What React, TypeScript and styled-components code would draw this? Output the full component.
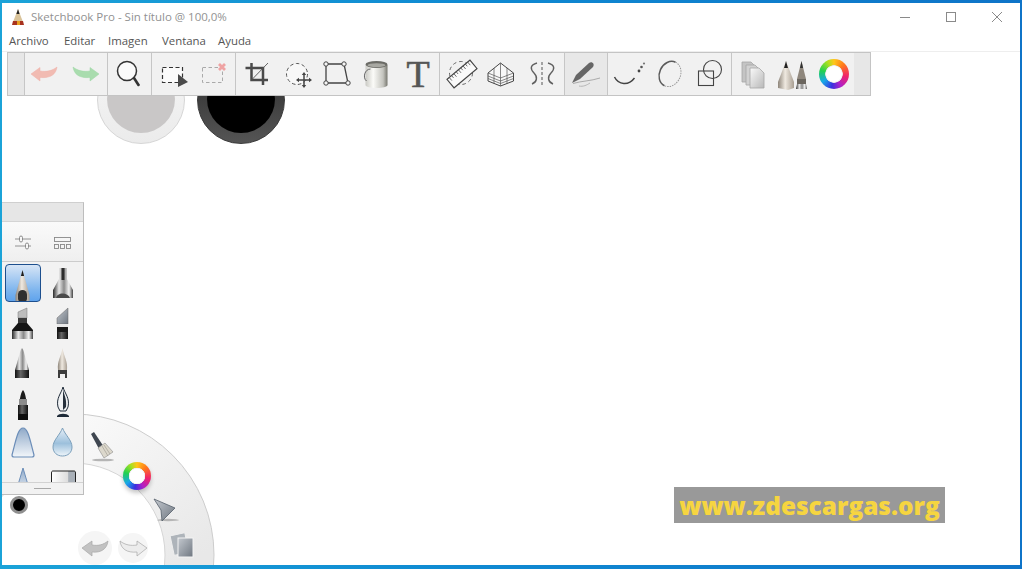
import * as React from "react";
import styled, { createGlobalStyle } from "styled-components";

const GlobalStyle = createGlobalStyle`
  html, body, #root {
    margin: 0;
    width: 100%;
    height: 100%;
    overflow: hidden;
  }
  body {
    font-family: "Open Sans", "Liberation Sans", sans-serif;
  }
`;

const Window = styled.div`
  box-sizing: border-box;
  width: 1022px;
  height: 569px;
  padding: 3px 2px 4px;
  display: flex;
  flex-direction: column;
  background: linear-gradient(90deg, #1ba3d8 0%, #0f8ad2 45%, #0f74c8 100%);
`;

const TitleBar = styled.div`
  height: 27px;
  flex: none;
  display: flex;
  align-items: center;
  background: #fff;
  padding-left: 9px;
`;

const AppTitle = styled.span`
  margin-left: 6px;
  font-size: 11.5px;
  color: #929292;
`;

const WindowButtons = styled.div`
  margin-left: auto;
  display: flex;
  align-items: center;
`;

const WindowButton = styled.div`
  width: 46px;
  height: 27px;
  display: flex;
  align-items: center;
  justify-content: center;
`;

const MenuBar = styled.div`
  box-sizing: border-box;
  height: 22px;
  flex: none;
  display: grid;
  grid-template-columns: 55px 44px 54px 56px 40px;
  align-items: center;
  padding: 0 0 0 7px;
  background: #fff;
  border-bottom: 1px solid #eeeeee;
`;

const MenuItem = styled.span`
  font-size: 11.4px;
  color: #555;
`;

const Canvas = styled.div`
  flex: 1;
  position: relative;
  overflow: hidden;
  background: #fff;
`;

const Toolbar = styled.div`
  box-sizing: border-box;
  position: absolute;
  z-index: 3;
  left: 5px;
  top: 0;
  width: 864px;
  height: 44px;
  display: flex;
  border: 1px solid #c4c4c4;
  background: #e7e7e7;
`;

const ToolEnd = styled.div<{ $w: number }>`
  width: ${(p) => p.$w}px;
  flex: none;
`;

const ToolSection = styled.div<{ $w: number }>`
  box-sizing: border-box;
  width: ${(p) => p.$w}px;
  flex: none;
  display: flex;
  background: #f1f1f1;
  border-left: 1px solid #c6c6c6;
`;

const ToolSlot = styled.div<{ $active?: boolean }>`
  flex: 1;
  display: flex;
  align-items: center;
  justify-content: center;
  background: ${(p) => (p.$active ? "#e8e8e8" : "transparent")};
`;

const Icon = styled.svg`
  width: 40px;
  height: 40px;
  flex: none;
  display: block;
`;

const ColorRing = styled.div<{ $size: number; $hole: number }>`
  width: ${(p) => p.$size}px;
  height: ${(p) => p.$size}px;
  flex: none;
  border-radius: 50%;
  background:
    radial-gradient(circle, #ffffff ${(p) => p.$hole - 1}px, #e8e8e8 ${(p) => p.$hole}px, transparent ${(p) => p.$hole + 0.5}px),
    conic-gradient(#ffc61a, #ff7a1a 45deg, #f0246a 100deg, #b020c8 150deg, #3a30e0 190deg, #18a8e8 235deg, #22d050 285deg, #a8e020 330deg, #ffc61a);
`;

const Puck = styled.div<{ $left: number; $dark?: boolean }>`
  position: absolute;
  left: ${(p) => p.$left}px;
  top: 4px;
  width: 88px;
  height: 88px;
  box-sizing: border-box;
  border-radius: 50%;
  display: flex;
  align-items: center;
  justify-content: center;
  padding-bottom: 2px;
  background: ${(p) =>
    p.$dark
      ? "linear-gradient(#2a2a2a, #555)"
      : "linear-gradient(#f6f6f6, #ebebeb)"};
  border: 1px solid ${(p) => (p.$dark ? "#3a3a3a" : "#d6d6d6")};
`;

const PuckCore = styled.div<{ $dark?: boolean }>`
  width: 68px;
  height: 68px;
  border-radius: 50%;
  background: ${(p) => (p.$dark ? "#000" : "#c9c7c7")};
`;

const BrushPalette = styled.div`
  position: absolute;
  z-index: 2;
  left: 0;
  top: 150px;
  width: 82px;
  height: 293px;
  box-sizing: border-box;
  display: flex;
  flex-direction: column;
  background: #f2f2f2;
  border-right: 1px solid #bdbdbd;
  border-top: 1px solid #cfcfcf;
  border-bottom: 1px solid #bdbdbd;
`;

const PaletteHeader = styled.div`
  height: 18px;
  flex: none;
  background: #e6e6e6;
  border-bottom: 1px solid #d4d4d4;
`;

const PaletteTools = styled.div`
  height: 40px;
  flex: none;
  box-sizing: border-box;
  display: grid;
  grid-template-columns: 40px 40px;
  align-items: center;
  justify-items: center;
  background: linear-gradient(#fafafa, #efefef);
  border-bottom: 1px solid #cccccc;
`;

const BrushGrid = styled.div`
  height: 220px;
  flex: none;
  overflow: hidden;
  display: grid;
  grid-template-columns: 40px 40px;
  grid-auto-rows: 40.5px;
`;

const BrushCell = styled.div<{ $selected?: boolean }>`
  display: flex;
  align-items: center;
  justify-content: center;
  overflow: hidden;
  ${(p) =>
    p.$selected
      ? `
    margin: 2px 1px 1px 3px;
    border: 1px solid #1d4f8e;
    border-radius: 4px;
    background: linear-gradient(#d7e5f6, #7eb5ee 70%, #5fa3ec);
  `
      : ""}
`;

const PaletteFooter = styled.div`
  flex: 1;
  display: flex;
  align-items: center;
  justify-content: center;
  border-top: 1px solid #d2d2d2;
`;

const FooterGrip = styled.div`
  width: 17px;
  height: 1px;
  background: #a8a8a8;
`;

const ColorDot = styled.div`
  position: absolute;
  left: 8px;
  top: 444px;
  width: 18px;
  height: 18px;
  box-sizing: border-box;
  border-radius: 50%;
  background: #000;
  border: 3px solid #8f8f8f;
`;

const Lagoon = styled.div`
  position: absolute;
  z-index: 1;
  left: 0;
  top: 340px;
  width: 230px;
  height: 173px;
`;

const LagoonArt = styled.svg`
  display: block;
  width: 230px;
  height: 173px;
`;

const LagoonRing = styled.div`
  position: absolute;
  left: 121px;
  top: 70px;
  filter: drop-shadow(0 3px 2px rgba(0, 0, 0, 0.22));
`;

const Watermark = styled.div`
  position: absolute;
  z-index: 2;
  left: 672px;
  top: 435px;
  width: 271px;
  height: 36px;
  display: flex;
  align-items: center;
  justify-content: center;
  background: #999999;
  color: #f6d540;
  font-family: "Open Sans", sans-serif;
  font-weight: 800;
  font-size: 24.4px;
  white-space: nowrap;
`;

const GradientDefs = () => (
  <svg width="0" height="0" style={{ display: "block" }}>
    <defs>
      <linearGradient id="metal" x1="0" x2="1" y1="0" y2="0">
        <stop offset="0" stopColor="#2a2a2a" />
        <stop offset="0.3" stopColor="#e8e8e8" />
        <stop offset="0.55" stopColor="#8a8a8a" />
        <stop offset="0.8" stopColor="#f4f4f4" />
        <stop offset="1" stopColor="#444" />
      </linearGradient>
      <linearGradient id="dark" x1="0" x2="1" y1="0" y2="0">
        <stop offset="0" stopColor="#111" />
        <stop offset="0.4" stopColor="#666" />
        <stop offset="1" stopColor="#111" />
      </linearGradient>
      <linearGradient id="beige" x1="0" x2="1" y1="0" y2="0">
        <stop offset="0" stopColor="#8e857a" />
        <stop offset="0.45" stopColor="#efe9e0" />
        <stop offset="1" stopColor="#a89e92" />
      </linearGradient>
      <linearGradient id="paper" x1="0" x2="1" y1="0" y2="1">
        <stop offset="0" stopColor="#fafafa" />
        <stop offset="1" stopColor="#b8b8b8" />
      </linearGradient>
      <linearGradient id="can" x1="0" x2="1" y1="0" y2="0">
        <stop offset="0" stopColor="#c9c9c4" />
        <stop offset="0.35" stopColor="#fbfbf8" />
        <stop offset="0.8" stopColor="#c4c4be" />
        <stop offset="1" stopColor="#77776f" />
      </linearGradient>
      <linearGradient id="bell" x1="0" x2="0" y1="0" y2="1">
        <stop offset="0" stopColor="#8fa9c8" />
        <stop offset="1" stopColor="#f2f6fa" />
      </linearGradient>
      <linearGradient id="drop" x1="0" x2="0" y1="0" y2="1">
        <stop offset="0" stopColor="#e8f0f8" />
        <stop offset="0.55" stopColor="#9cc0dc" />
        <stop offset="1" stopColor="#eef5fa" />
      </linearGradient>
      <linearGradient id="rubber" x1="0" x2="1" y1="0" y2="0">
        <stop offset="0" stopColor="#ffffff" />
        <stop offset="0.7" stopColor="#dcdcdc" />
        <stop offset="0.71" stopColor="#a9b0b8" />
        <stop offset="1" stopColor="#a9b0b8" />
      </linearGradient>
      <linearGradient id="wheelBand" gradientUnits="userSpaceOnUse" x1="60" y1="415" x2="190" y2="565">
        <stop offset="0" stopColor="#fbfbfb" />
        <stop offset="1" stopColor="#e8e8e8" />
      </linearGradient>
      <linearGradient id="slate" x1="0" x2="1" y1="0" y2="1">
        <stop offset="0" stopColor="#c4c9cf" />
        <stop offset="1" stopColor="#6e7680" />
      </linearGradient>
    </defs>
  </svg>
);

const arrowLeft = "M7 20 L16 13.5 L16 17 C22 18 28 17 33 13 C32 20 27 24.5 16 23.5 L16 27 Z";

const UndoIcon = () => (
  <Icon viewBox="0 0 40 40">
    <path d={arrowLeft} transform="translate(-2 0)" fill="#f1bbb2" stroke="#eeb0a8" strokeWidth="0.5" />
  </Icon>
);

const RedoIcon = () => (
  <Icon viewBox="0 0 40 40">
    <path d={arrowLeft} transform="matrix(-1 0 0 1 39 0)" fill="#a9dcae" stroke="#9dd6a4" strokeWidth="0.5" />
  </Icon>
);

const ZoomIcon = () => (
  <Icon viewBox="0 0 40 40">
    <circle cx="17" cy="17" r="9.5" fill="#fafafa" stroke="#333" strokeWidth="1.5" />
    <path d="M24 24 L28.5 31" stroke="#333" strokeWidth="2.6" strokeLinecap="round" />
  </Icon>
);

const SelectIcon = () => (
  <Icon viewBox="0 0 40 40">
    <rect x="9.5" y="13.5" width="20" height="15" fill="#fbfbfb" stroke="#333" strokeWidth="1.2" strokeDasharray="4 2.5" />
    <path d="M25 20 L35 28 L25 33 Z" fill="#4a4a4a" />
  </Icon>
);

const DeselectIcon = () => (
  <Icon viewBox="0 0 40 40">
    <rect x="8.5" y="13.5" width="20" height="15" fill="none" stroke="#aaa" strokeWidth="1" strokeDasharray="3.5 2.5" />
    <path d="M25 10 L31 16 M31 10 L25 16" stroke="#efa3a3" strokeWidth="2.8" />
  </Icon>
);

const CropIcon = () => (
  <Icon viewBox="0 0 40 40">
    <path d="M9.5 14 H27 V31 M15.5 9 V26 H32" fill="none" stroke="#4a4a4a" strokeWidth="2.5" />
    <path d="M15.5 26 L32 9" stroke="#555" strokeWidth="0.9" />
  </Icon>
);

const TransformIcon = () => (
  <Icon viewBox="0 0 40 40">
    <circle cx="20" cy="20" r="10.5" fill="#f8f8f8" stroke="#555" strokeWidth="1" strokeDasharray="3.5 2.5" />
    <path d="M27 20 V32 M21 26 H33" stroke="#444" strokeWidth="1.5" />
    <path d="M27 18 L24.8 21 H29.2 Z M27 34 L24.8 31 H29.2 Z M19 26 L22 23.8 V28.2 Z M35 26 L32 23.8 V28.2 Z" fill="#444" />
  </Icon>
);

const DistortIcon = () => (
  <Icon viewBox="0 0 40 40">
    <path d="M9 10 H27 L31 29 H9 Z" fill="none" stroke="#444" strokeWidth="1.3" />
    {[[9, 10], [27, 10], [31, 29], [9, 29]].map(([cx, cy], i) => (
      <circle key={i} cx={cx} cy={cy} r="2.2" fill="#f6f6f6" stroke="#444" strokeWidth="1" />
    ))}
  </Icon>
);

const FillIcon = () => (
  <Icon viewBox="0 0 40 40">
    <path d="M7.5 11 V31 C7.5 35 29.5 35 29.5 31 V11 Z" fill="url(#can)" />
    <ellipse cx="18.5" cy="10.5" rx="11" ry="3.4" fill="#6b6b66" />
    <ellipse cx="18.5" cy="11.2" rx="9" ry="2" fill="#a8a8a2" />
    <path d="M12.5 15 C6.5 15 4.5 24 8.5 27" fill="none" stroke="#666" strokeWidth="1" />
  </Icon>
);

const TextIcon = () => (
  <Icon viewBox="0 0 40 40">
    <text x="19" y="33" textAnchor="middle" fontFamily="Liberation Serif, serif" fontSize="38" fill="#565656" stroke="#565656" strokeWidth="0.6">
      T
    </text>
  </Icon>
);

const RulerIcon = () => (
  <Icon viewBox="0 0 40 40">
    <circle cx="20" cy="19" r="11.5" fill="none" stroke="#666" strokeWidth="1" strokeDasharray="3.5 3" />
    <g transform="rotate(-40 21 20)">
      <rect x="6" y="14.5" width="30" height="11" fill="#fafafa" stroke="#444" strokeWidth="1.1" />
      <path d="M9 14.5 v4 M12 14.5 v3 M15 14.5 v4 M18 14.5 v3 M21 14.5 v4 M24 14.5 v3 M27 14.5 v4 M30 14.5 v3 M33 14.5 v4" stroke="#555" strokeWidth="0.8" />
    </g>
  </Icon>
);

const PerspectiveIcon = () => (
  <Icon viewBox="0 0 40 40">
    <path d="M18.5 9 L6 19 V27 L18.5 32 L31.5 27 V19 Z" fill="#f8f8f8" stroke="#444" strokeWidth="1" />
    <path d="M18.5 9 V32 M12 14 V29.5 M25 14 V29.5 M6 19 L18.5 24 L31.5 19 M6 22 L18.5 27 L31.5 22 M6 24.5 L18.5 29.5 L31.5 24.5" fill="none" stroke="#555" strokeWidth="0.7" />
  </Icon>
);

const SymmetryIcon = () => (
  <Icon viewBox="0 0 40 40">
    <path d="M19 8 V33" stroke="#555" strokeWidth="1" strokeDasharray="3 2" />
    <path d="M14 9 C7 11 7 15 11 19 C15 23 14 28 9 30 M25 9 C32 11 32 15 28 19 C24 23 25 28 30 30" fill="none" stroke="#606060" strokeWidth="1.4" />
  </Icon>
);

const PenToolIcon = () => (
  <Icon viewBox="0 0 40 40">
    <path d="M6 29 L10 21 L23 9 C26 7 29 10 27 13 L14 25 Z" fill="#666" />
    <path d="M7 29.5 C15 27 25 27 34 24" fill="none" stroke="#999" strokeWidth="0.8" />
    <path d="M13 32 C17 33 21 31 24 29" fill="none" stroke="#aaa" strokeWidth="0.8" />
  </Icon>
);

const StrokeIcon = () => (
  <Icon viewBox="0 0 40 40">
    <path d="M5.5 23 C9.5 31 19.5 32 25.5 24" fill="none" stroke="#444" strokeWidth="1.5" />
    <circle cx="30" cy="17" r="1.4" fill="#444" />
    <circle cx="32.5" cy="13" r="1.3" fill="#555" />
    <circle cx="35" cy="9.5" r="1.1" fill="#777" />
  </Icon>
);

const EllipseIcon = () => (
  <Icon viewBox="0 0 40 40">
    <g transform="rotate(25 20 20)">
      <path d="M20 7 A10.5 13 0 0 0 20 33" fill="none" stroke="#5a5a5a" strokeWidth="1.5" />
      <path d="M20 7 A10.5 13 0 0 1 20 33" fill="none" stroke="#999" strokeWidth="1" strokeDasharray="1.5 1" />
    </g>
  </Icon>
);

const ShapeIcon = () => (
  <Icon viewBox="0 0 40 40">
    <rect x="7.5" y="17" width="15" height="14.5" fill="none" stroke="#444" strokeWidth="1.1" />
    <circle cx="21.5" cy="15.5" r="9" fill="none" stroke="#444" strokeWidth="1.1" />
  </Icon>
);

const Sheet = ({ x, y, fill }: { x: number; y: number; fill: string }) => (
  <path
    d={`M${x} ${y} h9 l5 5 v15 h-14 Z`}
    fill={fill}
    stroke="#a6a6a6"
    strokeWidth="0.8"
  />
);

const LayersIcon = () => (
  <Icon viewBox="0 0 40 40">
    <Sheet x={10} y={8} fill="#c4c4c4" />
    <Sheet x={14} y={11} fill="#d2d2d2" />
    <Sheet x={18} y={14} fill="url(#paper)" />
  </Icon>
);

const BrushSetIcon = () => (
  <Icon viewBox="0 0 40 40">
    <path d="M13 7 L21 28 V34 L15 36 L5 34 V28 Z" fill="url(#beige)" />
    <path d="M13 7 L15 14 H11 Z" fill="#222" />
    <path d="M28.5 7 L33 25 H24 Z" fill="#8f877d" />
    <path d="M28.5 7 L30 14 H27 Z" fill="#333" />
    <rect x="24" y="25" width="9" height="5" fill="#6b665f" />
    <path d="M24 30 H33 L34 35 H23 Z" fill="url(#metal)" />
  </Icon>
);

const PencilNib = () => (
  <Icon viewBox="0 0 40 40">
    <path d="M19.5 7 L26.5 32 V40 H12.5 V32 Z" fill="url(#beige)" />
    <path d="M19.5 7 L21.1 13 H17.9 Z" fill="#1d1d1d" />
    <rect x="15" y="27" width="9" height="13" rx="4.5" fill="#303030" />
  </Icon>
);

const SilverMarkerNib = () => (
  <Icon viewBox="0 0 40 40">
    <path d="M17 6 H25 V17 L31 28 V36 H11 V28 L17 17 Z" fill="url(#metal)" />
    <rect x="19.5" y="6" width="3" height="12" fill="#2c2c2c" />
    <path d="M14 36 C15 30 26 30 28 36 Z" fill="#4a4a4a" />
  </Icon>
);

const ChiselMarkerNib = () => (
  <Icon viewBox="0 0 40 40">
    <path d="M16 9 L25 5 V15 H16 Z" fill="#bdbdbd" stroke="#777" strokeWidth="0.5" />
    <rect x="16" y="15" width="9" height="7" fill="#3a3a3a" />
    <path d="M16 20 H25 L31 27 V28 H10 V27 Z" fill="#161616" />
    <rect x="10" y="28" width="21" height="8" fill="url(#metal)" />
  </Icon>
);

const SlantMarkerNib = () => (
  <Icon viewBox="0 0 40 40">
    <path d="M15 15 L26 5 V21 H15 Z" fill="url(#slate)" stroke="#666" strokeWidth="0.5" />
    <rect x="15" y="21" width="11" height="3" fill="#e8e8e8" />
    <rect x="15" y="24" width="11" height="5" fill="#181818" />
    <rect x="15" y="29" width="11" height="7" fill="url(#dark)" />
  </Icon>
);

const BallpointNib = () => (
  <Icon viewBox="0 0 40 40">
    <path d="M20 5 C22 7 22 10 23 13 L27 27 H13 L17 13 C18 10 18 7 20 5 Z" fill="url(#metal)" />
    <rect x="13" y="27" width="14" height="8" fill="url(#dark)" />
  </Icon>
);

const HairBrushNib = () => (
  <Icon viewBox="0 0 40 40">
    <path d="M20.5 5 C22 14 26 18 25 27 H16 C15 18 19 14 20.5 5 Z" fill="url(#beige)" />
    <path d="M16 27 H25 V35 H23 V31 H18 V35 H16 Z" fill="#3d3d3d" />
  </Icon>
);

const BrushPenNib = () => (
  <Icon viewBox="0 0 40 40">
    <path d="M21 6 C24 10 24 16 25 21 H17 C18 16 18 10 21 6 Z" fill="#1c1c1c" />
    <rect x="17" y="15" width="8" height="6" fill="#8c8c8c" />
    <rect x="16" y="21" width="10" height="9" fill="url(#dark)" />
    <rect x="16" y="30" width="10" height="6" fill="#0f0f0f" />
  </Icon>
);

const FountainNib = () => (
  <Icon viewBox="0 0 40 40">
    <path d="M21 3 C23 10 28 14 26 23 L24 27 H18 L16 23 C14 14 19 10 21 3 Z" fill="#f0f2f4" stroke="#1e2a38" strokeWidth="1" />
    <path d="M21 5 C22 11 25 15 24 23 L21 26 Z" fill="#26303c" />
    <path d="M15 32 C17 29 25 29 27 32 V33 H15 Z" fill="#1e2a38" />
  </Icon>
);

const AirbrushNib = () => (
  <Icon viewBox="0 0 40 40">
    <path d="M21 4 C26 4 28 16 32 31 C32 33 31 33 30 33 H12 C11 33 10 33 10 31 C14 16 16 4 21 4 Z" fill="url(#bell)" stroke="#6b8db8" strokeWidth="1.2" />
  </Icon>
);

const DropNib = () => (
  <Icon viewBox="0 0 40 40">
    <path d="M20.5 4 C23 11 30 16 30 23 C30 28.5 26 32 20.5 32 C15 32 11 28.5 11 23 C11 16 18 11 20.5 4 Z" fill="url(#drop)" stroke="#7b9fbb" strokeWidth="1" />
  </Icon>
);

const ConeNib = () => (
  <Icon viewBox="0 0 40 40">
    <path d="M21 3 L29 30 H13 Z" fill="url(#bell)" stroke="#6b8db8" strokeWidth="1" />
  </Icon>
);

const EraserNib = () => (
  <Icon viewBox="0 0 40 40">
    <path d="M9.5 8 C9.5 6.5 10 6 11 6 H32 C33 6 33.5 6.5 33.5 8 V30 H9.5 Z" fill="url(#rubber)" stroke="#222" strokeWidth="1" />
  </Icon>
);

const SlidersIcon = () => (
  <Icon viewBox="0 0 40 40">
    <path d="M13 17 H29 M13 24 H29" stroke="#888" strokeWidth="0.9" />
    <rect x="17.5" y="14" width="3" height="6" rx="1.5" fill="#f6f6f6" stroke="#777" strokeWidth="0.8" />
    <rect x="23.5" y="21" width="3" height="6" rx="1.5" fill="#f6f6f6" stroke="#777" strokeWidth="0.8" />
  </Icon>
);

const LayoutIcon = () => (
  <Icon viewBox="0 0 40 40">
    <g fill="none" stroke="#888" strokeWidth="0.9">
      <rect x="12.5" y="15.5" width="16" height="4" />
      <rect x="12.5" y="22.5" width="4" height="4" />
      <rect x="18.5" y="22.5" width="4" height="4" />
      <rect x="24.5" y="22.5" width="4" height="4" />
    </g>
  </Icon>
);

const LagoonIcons = () => (
  <LagoonArt viewBox="2 392 230 173">
    <circle cx="73" cy="555" r="116.5" fill="none" stroke="url(#wheelBand)" strokeWidth="49" />
    <circle cx="73" cy="555" r="141" fill="none" stroke="#cdcdcd" strokeWidth="1" />
    <circle cx="73" cy="555" r="92" fill="none" stroke="#d6d6d6" strokeWidth="1" />

    <ellipse cx="103" cy="460" rx="11" ry="1.3" fill="#8b8b8b" opacity="0.6" />
    <path d="M91 434 L94 432 L102 444 L104 447 L100 450 L98 447 Z" fill="#3f4650" />
    <path d="M98 448 L105 443 L113 452 L104 458 Z" fill="#dcd8cc" stroke="#8d8d8d" strokeWidth="0.6" />
    <path d="M102 446 L108 456 M104 445 L110 454" stroke="#9a968c" strokeWidth="0.6" />

    <ellipse cx="168" cy="520" rx="11" ry="1.2" fill="#888" opacity="0.55" />
    <path d="M154 499 L175 508 L162 521 L161 510 Z" fill="url(#slate)" stroke="#55606b" strokeWidth="0.8" />

    <rect x="172" y="534" width="15" height="20" transform="rotate(-12 180 544)" fill="#aeb4ba" stroke="#eee" strokeWidth="1" />
    <rect x="178" y="538" width="15" height="19" fill="url(#slate)" stroke="#f4f4f4" strokeWidth="1" />

    <circle cx="95" cy="548" r="17" fill="#f5f5f5" />
    <circle cx="133" cy="548" r="15" fill="#f5f5f5" />
    <path d="M82 548 L92 541 L92 545 C98 546 103 545 108 541 C107 549 101 553 92 552 L92 556 Z" fill="#c2c2c2" stroke="#a8a8a8" strokeWidth="0.7" />
    <path d="M147 548 L137 541 L137 545 C131 546 125 545 120 541 C121 549 127 553 137 552 L137 556 Z" fill="#ececec" stroke="#a8a8a8" strokeWidth="0.7" />
  </LagoonArt>
);

const toolSections = [
  { width: 83, tools: [<UndoIcon />, <RedoIcon />] },
  { width: 44, tools: [<ZoomIcon />] },
  { width: 84, tools: [<SelectIcon />, <DeselectIcon />] },
  { width: 204, tools: [<CropIcon />, <TransformIcon />, <DistortIcon />, <FillIcon />, <TextIcon />] },
  { width: 125, tools: [<RulerIcon />, <PerspectiveIcon />, <SymmetryIcon />] },
  { width: 43, tools: [<PenToolIcon />], active: true },
  { width: 124, tools: [<StrokeIcon />, <EllipseIcon />, <ShapeIcon />] },
  {
    width: 123,
    tools: [<LayersIcon />, <BrushSetIcon />, <ColorRing $size={30} $hole={8.5} />],
  },
];

const nibs = [
  <PencilNib />,
  <SilverMarkerNib />,
  <ChiselMarkerNib />,
  <SlantMarkerNib />,
  <BallpointNib />,
  <HairBrushNib />,
  <BrushPenNib />,
  <FountainNib />,
  <AirbrushNib />,
  <DropNib />,
  <ConeNib />,
  <EraserNib />,
];

const menus = ["Archivo", "Editar", "Imagen", "Ventana", "Ayuda"];

const App = () => {
  return (
    <Window>
      <GlobalStyle />
      <TitleBar>
        <svg width="14" height="18" viewBox="0 0 14 18">
          <path d="M7 1 L12 14 H2 Z" fill="#d9c39a" />
          <path d="M7 1 L8.6 6 H5.4 Z" fill="#222" />
          <path d="M2 13 H12 L13 17 H1 Z" fill="#a8321e" />
          <path d="M6 13 H9 L9 17 H6 Z" fill="#e8a020" />
        </svg>
        <AppTitle>Sketchbook Pro - Sin título @ 100,0%</AppTitle>
        <WindowButtons>
          <WindowButton>
            <svg width="12" height="12" viewBox="0 0 12 12">
              <path d="M1 6.5 H11" stroke="#8a8a8a" />
            </svg>
          </WindowButton>
          <WindowButton>
            <svg width="12" height="12" viewBox="0 0 12 12">
              <rect x="1.5" y="1.5" width="9" height="9" fill="none" stroke="#8a8a8a" />
            </svg>
          </WindowButton>
          <WindowButton>
            <svg width="12" height="12" viewBox="0 0 12 12">
              <path d="M1 1 L11 11 M11 1 L1 11" stroke="#8a8a8a" />
            </svg>
          </WindowButton>
        </WindowButtons>
      </TitleBar>
      <MenuBar>
        {menus.map((menu) => (
          <MenuItem key={menu}>{menu}</MenuItem>
        ))}
      </MenuBar>
      <Canvas>
        <GradientDefs />
        <Puck $left={95}>
          <PuckCore />
        </Puck>
        <Puck $left={195} $dark>
          <PuckCore $dark />
        </Puck>
        <Toolbar>
          <ToolEnd $w={16} />
          {toolSections.map((section, i) => (
            <ToolSection key={i} $w={section.width}>
              {section.tools.map((tool, j) => (
                <ToolSlot key={j} $active={section.active}>
                  {tool}
                </ToolSlot>
              ))}
            </ToolSection>
          ))}
          <ToolEnd $w={16} />
        </Toolbar>
        <Lagoon>
          <LagoonIcons />
          <LagoonRing>
            <ColorRing $size={28} $hole={8} />
          </LagoonRing>
        </Lagoon>
        <BrushPalette>
          <PaletteHeader />
          <PaletteTools>
            <SlidersIcon />
            <LayoutIcon />
          </PaletteTools>
          <BrushGrid>
            {nibs.map((nib, i) => (
              <BrushCell key={i} $selected={i === 0}>
                {nib}
              </BrushCell>
            ))}
          </BrushGrid>
          <PaletteFooter>
            <FooterGrip />
          </PaletteFooter>
        </BrushPalette>
        <ColorDot />
        <Watermark>www.zdescargas.org</Watermark>
      </Canvas>
    </Window>
  );
};

export default App;
